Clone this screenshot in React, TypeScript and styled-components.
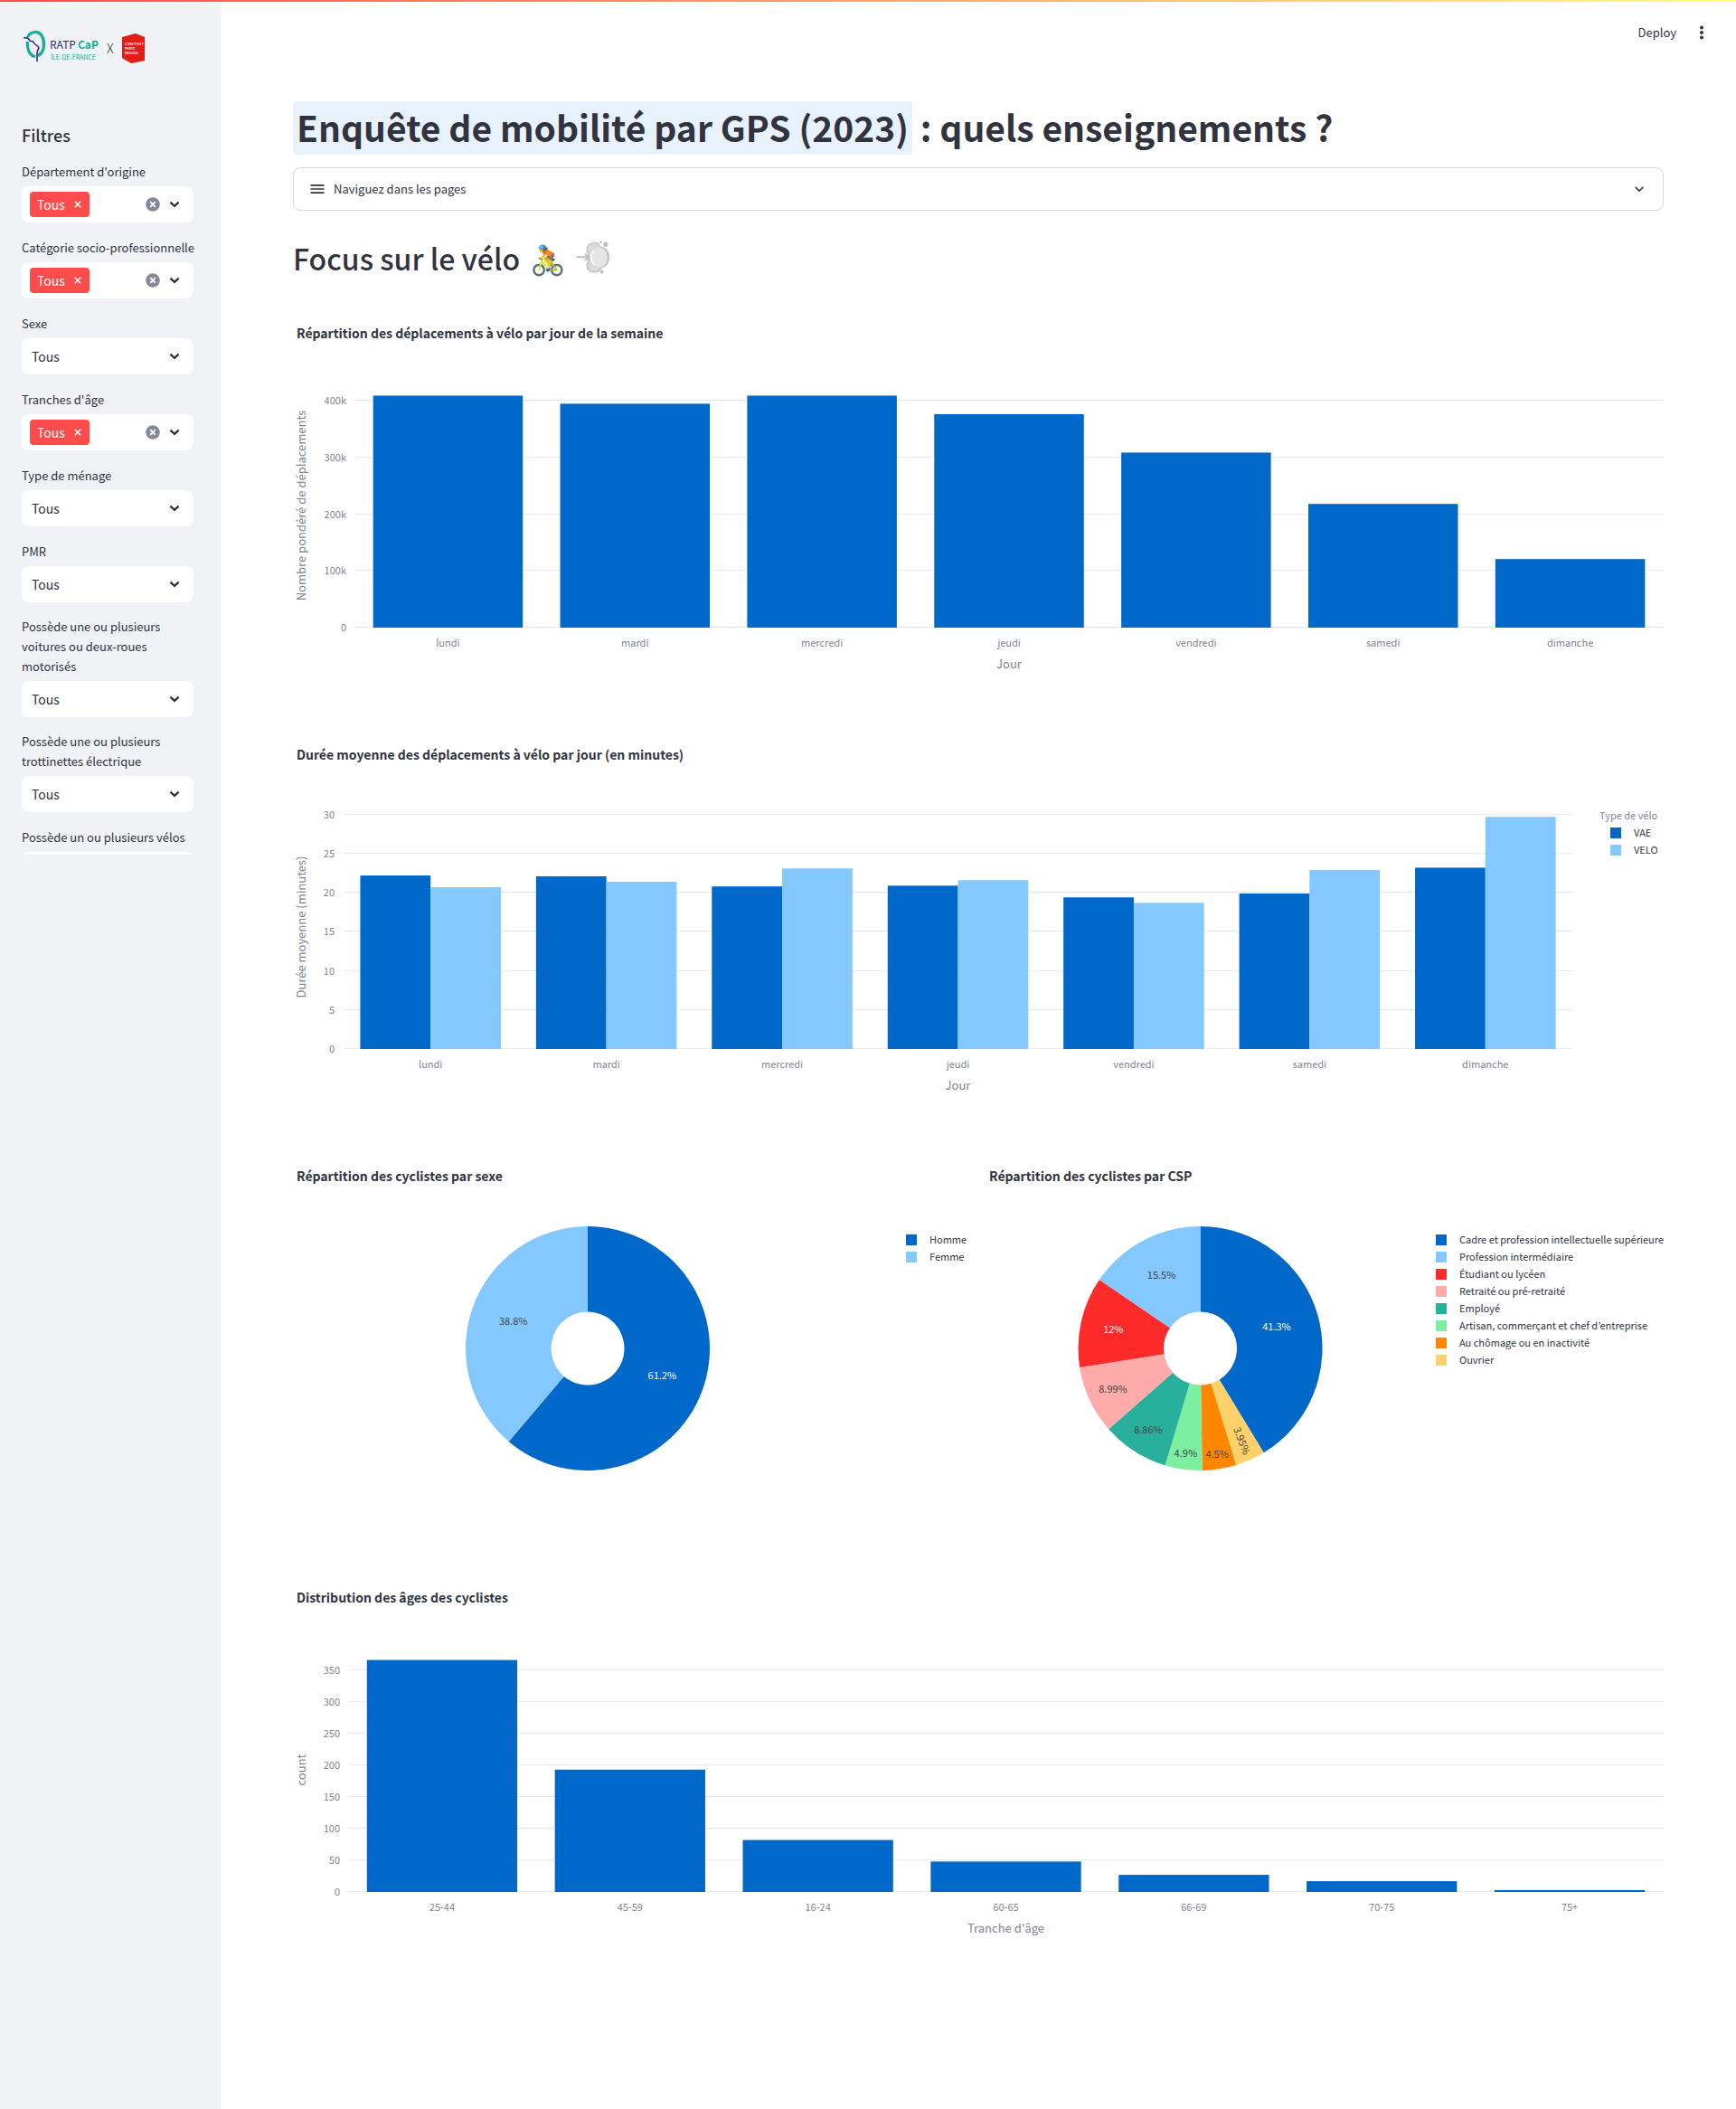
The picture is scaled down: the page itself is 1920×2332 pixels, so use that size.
import React, { useLayoutEffect, useRef, useState } from "react";
import styled, { createGlobalStyle } from "styled-components";

const color = {
  text: "#31333f",
  axis: "#808495",
  grid: "#e6eaf1",
  sidebar: "#f0f2f6",
  primary: "#ff4b4b",
  border: "#d6d6d9",
  blue: "#0068c9",
  sky: "#83c9ff",
};

const GlobalStyle = createGlobalStyle`
  *, *::before, *::after { box-sizing: border-box; }
  body {
    margin: 0;
    background: #ffffff;
    color: ${color.text};
    font-family: "Noto Sans CJK KR", "Noto Sans", sans-serif;
    font-size: 14px;
  }
  h1, h2, h3, p, ul { margin: 0; padding: 0; }
  button, select, input { font: inherit; color: inherit; }
`;

/* ---------- Page frame ---------- */

const Page = styled.div`
  display: flex;
  min-height: 100vh;
  border-top: 2px solid transparent;
  background:
    linear-gradient(90deg, #ff4b4b, #fffd80) top / 100% 2px no-repeat border-box,
    #ffffff;
`;

const Sidebar = styled.aside`
  flex: none;
  width: 244px;
  background: ${color.sidebar};
`;

const SidebarScroll = styled.div`
  max-height: 943px;
  overflow: hidden;
  padding: 28px 30px 0 24px;
`;

const Main = styled.main`
  flex: 1;
  min-width: 0;
`;

const Toolbar = styled.header`
  display: flex;
  justify-content: flex-end;
  align-items: center;
  gap: 16px;
  height: 68px;
  padding-right: 26px;
`;

const ToolButton = styled.button`
  display: flex;
  align-items: center;
  padding: 0;
  border: 0;
  background: none;
  font-size: 13px;
  line-height: 24px;
  cursor: pointer;
`;

const Content = styled.div`
  padding: 42px 80px 80px;
`;

/* ---------- Sidebar filters ---------- */

const LogoLink = styled.a`
  display: block;
  height: 44px;
`;

const SidebarTitle = styled.h2`
  margin: 63px 0 11px;
  font-size: 18px;
  font-weight: 500;
  line-height: 24px;
`;

const Filters = styled.form`
  display: flex;
  flex-direction: column;
  gap: 16px;
  padding-top: 6px;
`;

const Field = styled.div`
  display: flex;
  flex-direction: column;
  gap: 5px;
`;

const FieldLabel = styled.label`
  display: flex;
  align-items: flex-end;
  min-height: 23px;
  margin-right: -8px;
  font-size: 13px;
  line-height: 22px;
`;

const Control = styled.div`
  display: grid;
  grid-template-columns: 1fr 32px;
  align-items: center;
  height: 40px;
  border-radius: 8px;
  background: #ffffff;

  & > select {
    grid-area: 1 / 1 / 2 / 3;
  }
  & > svg {
    grid-area: 1 / 2;
    pointer-events: none;
  }
`;

const Select = styled.select`
  width: 100%;
  height: 40px;
  padding: 0 32px 0 11px;
  border: 0;
  border-radius: 8px;
  background: transparent;
  appearance: none;
  font-size: 14px;
  line-height: 24px;
`;

const TagRow = styled.div`
  display: flex;
  align-items: center;
  gap: 4px;
  min-width: 0;
  padding: 0 5px 0 9px;
`;

const Tag = styled.span`
  display: flex;
  align-items: center;
  gap: 10px;
  height: 28px;
  padding: 0 9px 0 8px;
  border-radius: 4px;
  background: ${color.primary};
  color: #ffffff;
  font-size: 14px;
  line-height: 28px;
`;

const IconButton = styled.button`
  display: flex;
  padding: 0;
  border: 0;
  background: none;
  cursor: pointer;
`;

const TagInput = styled.input`
  flex: 1;
  min-width: 0;
  width: 0;
  border: 0;
  outline: 0;
  background: transparent;
`;

/* ---------- Main content ---------- */

const Title = styled.h1`
  font-size: 39px;
  font-weight: 700;
  line-height: 57px;
`;

const Highlight = styled.span`
  display: inline-block;
  padding: 0 4px 2px;
  border-radius: 4px;
  background: #e8f2fc;
`;

const Expander = styled.button`
  display: flex;
  align-items: center;
  gap: 8px;
  width: 100%;
  height: 48px;
  margin-top: 14px;
  padding: 0 16px;
  border: 1px solid ${color.border};
  border-radius: 8px;
  background: #ffffff;
  font-size: 13px;
  line-height: 20px;
  cursor: pointer;
`;

const ExpanderLabel = styled.span`
  flex: 1;
  text-align: left;
`;

const Subtitle = styled.h2`
  display: flex;
  align-items: center;
  gap: 11px;
  height: 48px;
  margin: 28px 0 35px;
  font-size: 32px;
  font-weight: 500;
  line-height: 48px;
`;

const Charts = styled.div`
  display: grid;
  grid-template-columns: repeat(2, minmax(0, 1fr));
  gap: 16px;
`;

const Card = styled.section<{ $wide?: boolean }>`
  grid-column: ${(p) => (p.$wide ? "1 / -1" : "auto")};
  min-height: 450px;
`;

const CardTitle = styled.h3`
  height: 80px;
  padding: 12px 4px 0;
  font-size: 14px;
  font-weight: 700;
  line-height: 24px;
`;

const CardBody = styled.div<{ $legend: number }>`
  display: grid;
  grid-template-columns: minmax(0, 1fr) ${(p) => p.$legend}px;
`;

const Plot = styled.div`
  min-width: 0;

  & > svg {
    display: block;
    overflow: visible;
  }
`;

const AxisText = styled.text<{ $title?: boolean }>`
  fill: ${color.axis};
  font-size: ${(p) => (p.$title ? 13 : 11)}px;
`;

const SliceText = styled.text`
  font-size: 11px;
  text-anchor: middle;
`;

const Legend = styled.div<{ $top: number; $indent: number }>`
  padding: ${(p) => p.$top}px 0 0 ${(p) => p.$indent}px;
  font-size: 11px;
  line-height: 19px;
  white-space: nowrap;
`;

const LegendTitle = styled.p`
  color: ${color.axis};
`;

const LegendList = styled.ul<{ $nested?: boolean }>`
  padding-left: ${(p) => (p.$nested ? 12 : 0)}px;
  list-style: none;
`;

const LegendItem = styled.li`
  display: flex;
  align-items: center;
  gap: 14px;
`;

const Swatch = styled.span<{ $fill: string }>`
  width: 12px;
  height: 12px;
  background: ${(p) => p.$fill};
`;

/* ---------- Icons ---------- */

const Chevron = ({ size = 22 }: { size?: number }) => (
  <svg width={size} height={size} viewBox="0 0 24 24" aria-hidden="true">
    <path d="M7 9.5l5 4.6 5-4.6" fill="none" stroke={color.text} strokeWidth="2.6" />
  </svg>
);

const ThinChevron = () => (
  <svg width="20" height="20" viewBox="0 0 24 24" aria-hidden="true">
    <path d="M7.41 8.59 12 13.17l4.59-4.58L18 10l-6 6-6-6z" fill={color.text} />
  </svg>
);

const MenuIcon = () => (
  <svg width="20" height="20" viewBox="0 0 24 24" aria-hidden="true">
    <path d="M3 18h18v-2H3v2zm0-5h18v-2H3v2zm0-7v2h18V6H3z" fill={color.text} />
  </svg>
);

const DotsIcon = () => (
  <svg width="24" height="24" viewBox="0 0 24 24" aria-hidden="true" fill={color.text}>
    <circle cx="12" cy="6.5" r="2" />
    <circle cx="12" cy="12" r="2" />
    <circle cx="12" cy="17.5" r="2" />
  </svg>
);

const CrossIcon = () => (
  <svg width="8" height="8" viewBox="0 0 8 8" aria-hidden="true">
    <path d="M0.8 0.8l6.4 6.4M7.2 0.8L0.8 7.2" stroke="#ffffff" strokeWidth="1.5" />
  </svg>
);

const ClearIcon = () => (
  <svg width="16" height="16" viewBox="0 0 16 16" aria-hidden="true">
    <circle cx="8" cy="8" r="7.8" fill="#858898" />
    <path d="M5.2 5.2l5.6 5.6M10.8 5.2l-5.6 5.6" stroke="#ffffff" strokeWidth="1.8" />
  </svg>
);

const PuffIcon = () => (
  <svg width="38" height="38" viewBox="0 0 38 38" role="img" aria-label="Nuage de poussière">
    <path
      d="M0.500 17.200H11L8.500 13.800l5 2.200c-1-2-2.500-3.500-2-6.500C12 5 15.500 1.800 20 1.800c4 0 6.500 2 7.500 4.700 5.500.5 9.500 5.500 9.500 12 0 6-3.500 11-8.500 12-1.500 3-4 5-8.500 5-5 0-8.500-3.500-8.500-8 0-3 1.500-4 2-6.500l-5 2 2.500-3.800H0.500z"
      fill="#c0c0c0"
    />
    <path
      d="M14 14c-1-2-1.500-3-1.200-5C13.500 5.500 16.500 3 20 3c3.500 0 6 2 6.800 4.500 4.700.5 8.200 5 8.200 11s-3 10.500-7.500 11c-1.300 2.800-3.500 4.800-7.500 4.800s-7-3-7-7c0-3 1.700-4.300 2-7.300.2-2.500-.3-4.500-1-6z"
      fill="#d9d9d9"
    />
    <ellipse cx="25" cy="18.500" rx="9.500" ry="10.500" fill="#e6e6e6" />
    <path d="M19.500 11c-3 4-3 11.500 0.500 15.500" fill="none" stroke="#f9f9f9" strokeWidth="1.800" strokeLinecap="round" />
    <circle cx="27.500" cy="1.800" r="1.400" fill="#c2c2c2" />
    <circle cx="32.800" cy="4.200" r="2.600" fill="#bdbdbd" />
    <circle cx="28.500" cy="34.500" r="2" fill="#c2c2c2" />
  </svg>
);

const Logo = () => (
  <svg width="140" height="44" viewBox="0 0 140 44" role="img" aria-label="RATP CaP Île-de-France x L'Institut Paris Region">
    <path
      d="M6.500 11.500C8 7.500 11.500 5.500 15.500 5.500c5.500 0 9 5.500 9 13.500 0 6-2.500 10.500-6.500 12.500"
      fill="none"
      stroke="#0fb091"
      strokeWidth="3.200"
    />
    <path d="M6.500 16c-.8 9 2.500 15.500 8.500 16.500" fill="none" stroke="#0fb091" strokeWidth="3.200" />
    <path
      d="M2 12c4-1 6 .5 7 3 2 1 4 0 5 3 1 2 4 2 5 5-1 3-2 3-2 6v9"
      fill="none"
      stroke="#2f2a93"
      strokeWidth="1.600"
      strokeLinejoin="round"
    />
    <text x="31" y="24" fontSize="12" fontWeight="400" fill="#2f2a93">RATP</text>
    <text x="62" y="24" fontSize="12" fontWeight="700" fill="#0fb091">CaP</text>
    <text x="32" y="36" fontSize="7" fill="#0fb091">ÎLE-DE-FRANCE</text>
    <text x="94" y="29" fontSize="14" fontWeight="300" fill="#222222">X</text>
    <path d="M111 11l15-4 10 4v26l-15 3-10-6z" fill="#e41b17" />
    <g fill="#ffffff" fontSize="4" fontWeight="500">
      <text x="114" y="20">L'INSTITUT</text>
      <text x="114" y="25">PARIS</text>
      <text x="114" y="30">REGION</text>
    </g>
  </svg>
);

/* ---------- Charts ---------- */

const PLOT_HEIGHT = 270;
const BODY_HEIGHT = 370;

function useWidth(initial: number) {
  const ref = useRef<HTMLDivElement>(null);
  const [width, setWidth] = useState(initial);
  useLayoutEffect(() => {
    const el = ref.current;
    if (!el) return;
    const measure = () => setWidth(el.clientWidth);
    measure();
    const observer = new ResizeObserver(measure);
    observer.observe(el);
    return () => observer.disconnect();
  }, []);
  return [ref, width] as const;
}

type Series = { name: string; fill: string; values: number[] };

type BarChartProps = {
  categories: string[];
  series: Series[];
  ticks: number[];
  formatTick?: (v: number) => string;
  max: number;
  left: number;
  xTitle: string;
  yTitle: string;
};

function BarChart({ categories, series, ticks, formatTick = String, max, left, xTitle, yTitle }: BarChartProps) {
  const [ref, width] = useWidth(1516);
  const band = (width - left) / categories.length;
  const barWidth = (band * 0.8) / series.length;
  const y = (v: number) => PLOT_HEIGHT - (v / max) * PLOT_HEIGHT;

  return (
    <Plot ref={ref}>
      <svg width={width} height={BODY_HEIGHT} role="img" aria-label={`${yTitle} / ${xTitle}`}>
        {ticks.map((t) => (
          <g key={t}>
            <rect x={left} y={Math.round(y(t)) - 1} width={width - left} height="1" fill={color.grid} />
            <AxisText x={left - 9} y={y(t) + 4} textAnchor="end">
              {formatTick(t)}
            </AxisText>
          </g>
        ))}
        {series.map((s, si) =>
          s.values.map((v, i) => (
            <rect
              key={`${s.name}-${i}`}
              x={left + band * (i + 0.1) + barWidth * si}
              y={y(v)}
              width={barWidth}
              height={PLOT_HEIGHT - y(v)}
              fill={s.fill}
            />
          ))
        )}
        {categories.map((c, i) => (
          <AxisText key={c} x={left + band * (i + 0.5)} y={291} textAnchor="middle">
            {c}
          </AxisText>
        ))}
        <AxisText $title x={left + (width - left) / 2} y={315} textAnchor="middle">
          {xTitle}
        </AxisText>
        <AxisText $title transform={`translate(14 ${PLOT_HEIGHT / 2}) rotate(-90)`} textAnchor="middle">
          {yTitle}
        </AxisText>
      </svg>
    </Plot>
  );
}

type Slice = { name: string; value: number; fill: string; label: string; ink: string; r: number; turn?: number };

function DonutChart({ slices, name }: { slices: Slice[]; name: string }) {
  const [ref, width] = useWidth(600);
  const R = PLOT_HEIGHT / 2;
  const hole = R * 0.3;
  const cx = width / 2;
  const total = slices.reduce((sum, s) => sum + s.value, 0);
  const point = (r: number, a: number) => [cx + r * Math.sin(a), R - r * Math.cos(a)];
  let angle = 0;

  return (
    <Plot ref={ref}>
      <svg width={width} height={BODY_HEIGHT} role="img" aria-label={name}>
        {slices.map((s) => {
          const a0 = angle;
          const a1 = (angle += (s.value / total) * Math.PI * 2);
          const large = a1 - a0 > Math.PI ? 1 : 0;
          const [x0, y0] = point(R, a0);
          const [x1, y1] = point(R, a1);
          const [x2, y2] = point(hole, a1);
          const [x3, y3] = point(hole, a0);
          const [tx, ty] = point(R * s.r, (a0 + a1) / 2);
          return (
            <g key={s.name}>
              <path
                d={`M${x0} ${y0}A${R} ${R} 0 ${large} 1 ${x1} ${y1}L${x2} ${y2}A${hole} ${hole} 0 ${large} 0 ${x3} ${y3}Z`}
                fill={s.fill}
              />
              <SliceText fill={s.ink} transform={`translate(${tx} ${ty}) rotate(${s.turn ?? 0})`} y="4">
                {s.label}
              </SliceText>
            </g>
          );
        })}
      </svg>
    </Plot>
  );
}

function LegendItems({ items, nested }: { items: { name: string; fill: string }[]; nested?: boolean }) {
  return (
    <LegendList $nested={nested}>
      {items.map((item) => (
        <LegendItem key={item.name}>
          <Swatch $fill={item.fill} />
          {item.name}
        </LegendItem>
      ))}
    </LegendList>
  );
}

/* ---------- Data ---------- */

const DAYS = ["lundi", "mardi", "mercredi", "jeudi", "vendredi", "samedi", "dimanche"];
const AGES = ["25-44", "45-59", "16-24", "60-65", "66-69", "70-75", "75+"];

const TRIPS: Series[] = [
  { name: "Déplacements", fill: color.blue, values: [409500, 395200, 409500, 376700, 309000, 218400, 121000] },
];

const DURATIONS: Series[] = [
  { name: "VAE", fill: color.blue, values: [22.2, 22.1, 20.8, 20.9, 19.4, 19.9, 23.2] },
  { name: "VELO", fill: color.sky, values: [20.7, 21.4, 23.1, 21.6, 18.7, 22.9, 29.7] },
];

const AGE_COUNTS: Series[] = [{ name: "count", fill: color.blue, values: [366, 193, 82, 48, 27, 17, 3] }];

const INK = "#444444";

const GENDERS: Slice[] = [
  { name: "Homme", value: 61.2, fill: color.blue, label: "61.2%", ink: "#ffffff", r: 0.65 },
  { name: "Femme", value: 38.8, fill: color.sky, label: "38.8%", ink: INK, r: 0.65 },
];

const CSP: Slice[] = [
  { name: "Cadre et profession intellectuelle supérieure", value: 41.3, fill: color.blue, label: "41.3%", ink: "#ffffff", r: 0.65 },
  { name: "Ouvrier", value: 3.95, fill: "#ffd16a", label: "3.95%", ink: INK, r: 0.83, turn: 69 },
  { name: "Au chômage ou en inactivité", value: 4.5, fill: "#ff8700", label: "4.5%", ink: INK, r: 0.88 },
  { name: "Artisan, commerçant et chef d’entreprise", value: 4.9, fill: "#7defa1", label: "4.9%", ink: INK, r: 0.87 },
  { name: "Employé", value: 8.86, fill: "#29b09d", label: "8.86%", ink: INK, r: 0.79 },
  { name: "Retraité ou pré-retraité", value: 8.99, fill: "#ffabab", label: "8.99%", ink: INK, r: 0.79 },
  { name: "Étudiant ou lycéen", value: 12, fill: "#ff2b2b", label: "12%", ink: "#ffffff", r: 0.73 },
  { name: "Profession intermédiaire", value: 15.5, fill: color.sky, label: "15.5%", ink: INK, r: 0.68 },
];

const CSP_LEGEND = [CSP[0], ...CSP.slice(1).reverse()];

const FILTERS: { label: string; multi?: boolean }[] = [
  { label: "Département d'origine", multi: true },
  { label: "Catégorie socio-professionnelle", multi: true },
  { label: "Sexe" },
  { label: "Tranches d'âge", multi: true },
  { label: "Type de ménage" },
  { label: "PMR" },
  { label: "Possède une ou plusieurs voitures ou deux-roues motorisés" },
  { label: "Possède une ou plusieurs trottinettes électrique" },
  { label: "Possède un ou plusieurs vélos" },
];

function Filter({ label, multi, id }: { label: string; multi?: boolean; id: string }) {
  return (
    <Field>
      <FieldLabel htmlFor={id}>{label}</FieldLabel>
      <Control>
        {multi ? (
          <TagRow>
            <Tag>
              Tous
              <IconButton type="button" aria-label="Retirer Tous">
                <CrossIcon />
              </IconButton>
            </Tag>
            <TagInput id={id} type="text" />
            <IconButton type="button" aria-label="Tout effacer">
              <ClearIcon />
            </IconButton>
          </TagRow>
        ) : (
          <Select id={id} defaultValue="Tous">
            <option>Tous</option>
          </Select>
        )}
        <Chevron />
      </Control>
    </Field>
  );
}

export default function App() {
  return (
    <>
      <GlobalStyle />
      <Page>
        <Sidebar>
          <SidebarScroll>
            <LogoLink href="#">
              <Logo />
            </LogoLink>
            <SidebarTitle>Filtres</SidebarTitle>
            <Filters>
              {FILTERS.map((f, i) => (
                <Filter key={f.label} id={`filtre-${i}`} label={f.label} multi={f.multi} />
              ))}
            </Filters>
          </SidebarScroll>
        </Sidebar>
        <Main>
          <Toolbar>
            <ToolButton type="button">Deploy</ToolButton>
            <ToolButton type="button" aria-label="Menu">
              <DotsIcon />
            </ToolButton>
          </Toolbar>
          <Content>
            <Title>
              <Highlight>Enquête de mobilité par GPS (2023)</Highlight> : quels enseignements ?
            </Title>
            <Expander type="button" aria-expanded="false">
              <MenuIcon />
              <ExpanderLabel>Naviguez dans les pages</ExpanderLabel>
              <ThinChevron />
            </Expander>
            <Subtitle>
              <span>Focus sur le vélo</span>
              <span>🚴</span>
              <PuffIcon />
            </Subtitle>
            <Charts>
              <Card $wide>
                <CardTitle>Répartition des déplacements à vélo par jour de la semaine</CardTitle>
                <CardBody $legend={0}>
                  <BarChart
                    categories={DAYS}
                    series={TRIPS}
                    ticks={[0, 100000, 200000, 300000, 400000]}
                    formatTick={(v) => (v ? `${v / 1000}k` : "0")}
                    max={431000}
                    left={68}
                    xTitle="Jour"
                    yTitle="Nombre pondéré de déplacements"
                  />
                </CardBody>
              </Card>
              <Card $wide>
                <CardTitle>Durée moyenne des déplacements à vélo par jour (en minutes)</CardTitle>
                <CardBody $legend={100}>
                  <BarChart
                    categories={DAYS}
                    series={DURATIONS}
                    ticks={[0, 5, 10, 15, 20, 25, 30]}
                    max={31.23}
                    left={55}
                    xTitle="Jour"
                    yTitle="Durée moyenne (minutes)"
                  />
                  <Legend $top={2} $indent={29}>
                    <LegendTitle>Type de vélo</LegendTitle>
                    <LegendItems items={DURATIONS} nested />
                  </Legend>
                </CardBody>
              </Card>
              <Card>
                <CardTitle>Répartition des cyclistes par sexe</CardTitle>
                <CardBody $legend={98}>
                  <DonutChart name="Répartition des cyclistes par sexe" slices={GENDERS} />
                  <Legend $top={5} $indent={26}>
                    <LegendItems items={GENDERS} />
                  </Legend>
                </CardBody>
              </Card>
              <Card>
                <CardTitle>Répartition des cyclistes par CSP</CardTitle>
                <CardBody $legend={275}>
                  <DonutChart name="Répartition des cyclistes par CSP" slices={CSP} />
                  <Legend $top={5} $indent={23}>
                    <LegendItems items={CSP_LEGEND} />
                  </Legend>
                </CardBody>
              </Card>
              <Card $wide>
                <CardTitle>Distribution des âges des cyclistes</CardTitle>
                <CardBody $legend={0}>
                  <BarChart
                    categories={AGES}
                    series={AGE_COUNTS}
                    ticks={[0, 50, 100, 150, 200, 250, 300, 350]}
                    max={385.3}
                    left={61}
                    xTitle="Tranche d'âge"
                    yTitle="count"
                  />
                </CardBody>
              </Card>
            </Charts>
          </Content>
        </Main>
      </Page>
    </>
  );
}
